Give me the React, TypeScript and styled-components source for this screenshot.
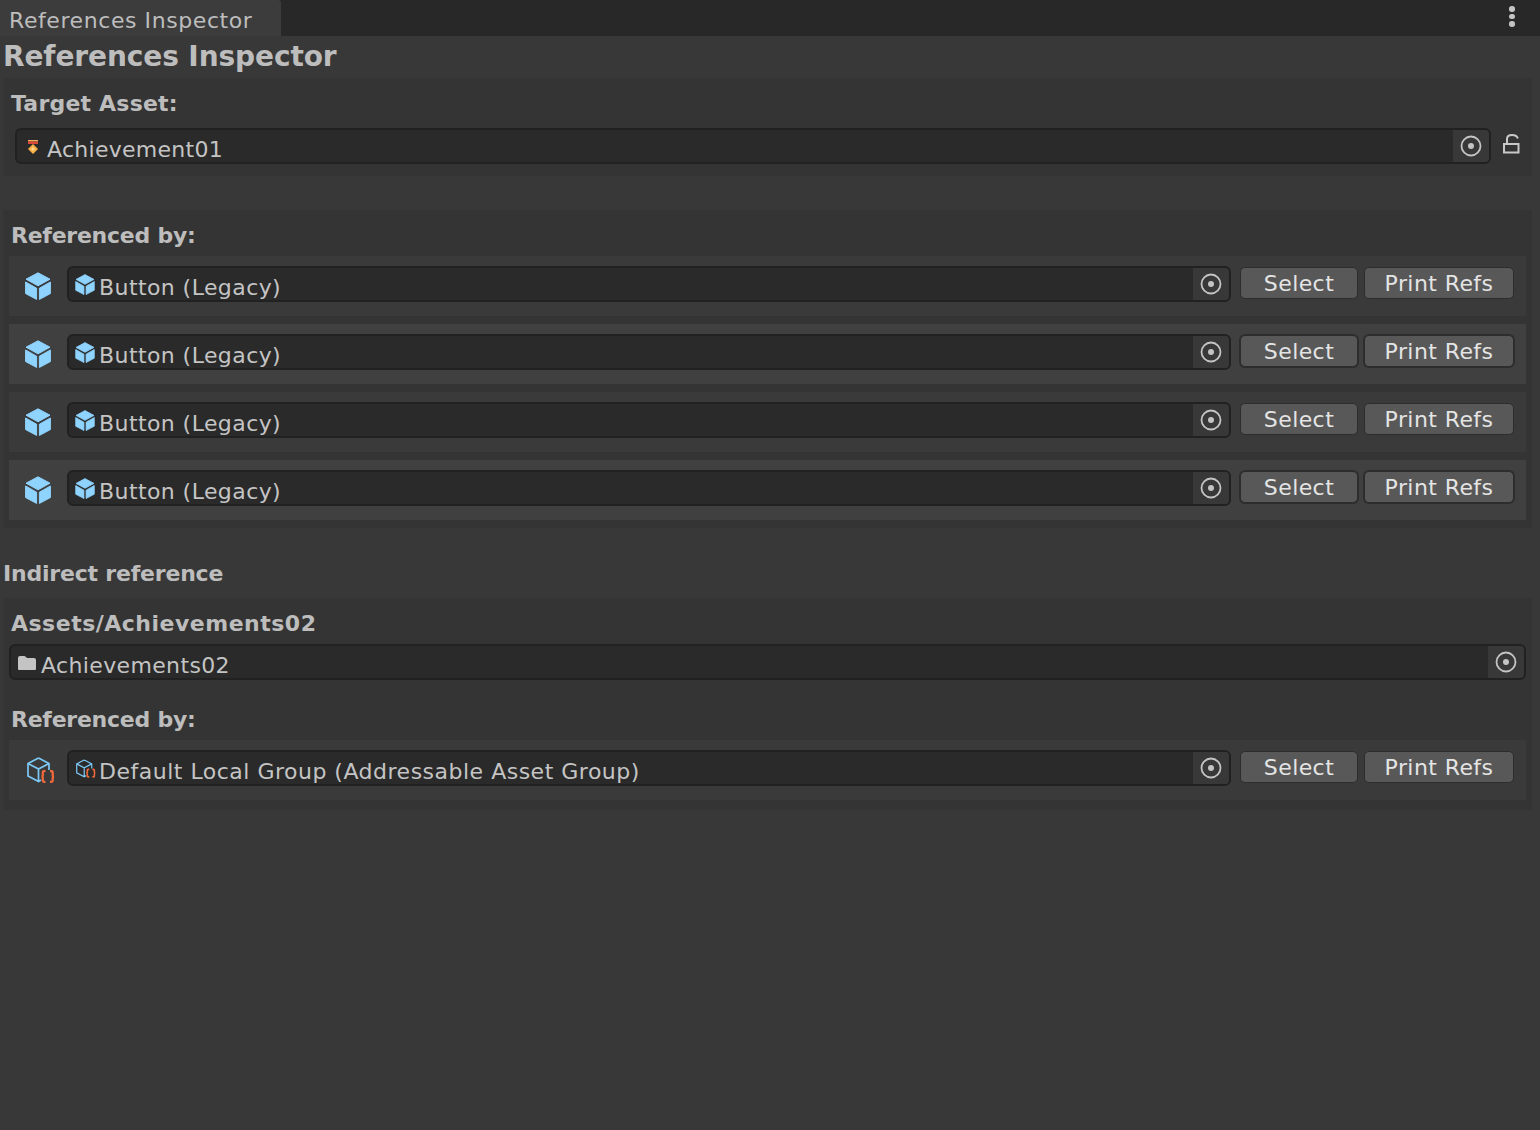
import React from "react";
import styled, { createGlobalStyle } from "styled-components";

const Global = createGlobalStyle`
  html, body {
    margin: 0;
    padding: 0;
    background: #383838;
  }
  body {
    font-family: "DejaVu Sans", Verdana, sans-serif;
    color: #c4c4c4;
  }
`;

function CubeIcon({ width, height }: { width: number; height: number }) {
  return (
    <svg width={width} height={height} viewBox="0 0 26 28">
      <g fill="#8fd3ff" stroke="#8fd3ff" strokeWidth="1" strokeLinejoin="round">
        <path d="M13 0.8 L25 7.2 L13 13.8 L1 7.2 Z" />
        <path d="M0.6 10 L11.6 16.2 L11.6 27.4 L0.6 21.6 Z" />
        <path d="M25.4 10 L14.4 16.2 L14.4 27.4 L25.4 21.6 Z" />
      </g>
    </svg>
  );
}

function GroupIcon({ width, height }: { width: number; height: number }) {
  return (
    <svg width={width} height={height} viewBox="0 0 28 26" fill="none">
      <path
        d="M11.5 1 L22 6.5 L22 13 M14 23 L11.5 24.5 L1 19 L1 6.5 L11.5 1 M1 6.5 L11.5 12 L22 6.5 M11.5 12 L11.5 24.5"
        stroke="#7cc8f5"
        strokeWidth="1.7"
      />
      <path
        d="M18.5 14.2 L17 14.2 Q15.8 14.2 15.8 15.4 L15.8 18.2 Q15.8 19.6 14.4 19.6 Q15.8 19.6 15.8 21 L15.8 23.6 Q15.8 24.8 17 24.8 L18.5 24.8 M23 14.2 L24.5 14.2 Q25.7 14.2 25.7 15.4 L25.7 18.2 Q25.7 19.6 27.1 19.6 Q25.7 19.6 25.7 21 L25.7 23.6 Q25.7 24.8 24.5 24.8 L23 24.8"
        stroke="#f0693a"
        strokeWidth="2.3"
      />
    </svg>
  );
}

function MedalIcon() {
  return (
    <svg width="10" height="14" viewBox="0 0 10 14">
      <rect x="0" y="0" width="10" height="1.5" fill="#f3b05c" />
      <rect x="0" y="1.5" width="10" height="2.5" fill="#d9483b" />
      <path d="M5 4 L10 9 L5 14 L0 9 Z" fill="#f6b04a" />
      <path d="M5 7 L7 9 L5 11 L3 9 Z" fill="#ffd98a" />
    </svg>
  );
}

function FolderIcon() {
  return (
    <svg width="20" height="18" viewBox="0 0 20 18">
      <path
        d="M1 4 Q1 2 3 2 L7 2 Q8 2 9 3 L10 4 L17 4 Q19 4 19 6 L19 15 Q19 16 18 16 L2 16 Q1 16 1 15 Z"
        fill="#c4c4c4"
      />
    </svg>
  );
}

function PickerIcon() {
  return (
    <svg width="22" height="22" viewBox="0 0 22 22" fill="none">
      <circle cx="11" cy="11" r="9.5" stroke="#c4c4c4" strokeWidth="1.8" />
      <circle cx="11" cy="11" r="3" fill="#c4c4c4" />
    </svg>
  );
}

function LockIcon() {
  return (
    <LockWrap>
      <svg width="18" height="22" viewBox="0 0 18 22" fill="none">
        <path d="M5 10 L5 6 Q5 2 10 2 Q15 2 15.8 5.5" stroke="#c8c8c8" strokeWidth="2" />
        <rect x="2" y="11" width="14.5" height="8.5" stroke="#c8c8c8" strokeWidth="2" />
      </svg>
    </LockWrap>
  );
}

const LockWrap = styled.div`
  display: flex;
  height: 22px;
  margin-top: -4px;
`;

const Window = styled.div`
  width: 1540px;
  height: 1130px;
  overflow: hidden;
  background: #383838;
  display: flex;
  flex-direction: column;
`;

const TabBar = styled.div`
  height: 36px;
  flex-shrink: 0;
  display: flex;
  justify-content: space-between;
  background: #282828;
`;

const Tab = styled.div`
  width: 281px;
  box-sizing: border-box;
  padding: 6px 0 0 9px;
  background: #3c3c3c;
  border-top-right-radius: 3px;
  font-size: 22px;
  letter-spacing: 0.58px;
  line-height: 30px;
  color: #bdbdbd;
`;

const MenuDots = styled.div`
  width: 28px;
  margin-right: 14px;
  display: flex;
  flex-direction: column;
  align-items: center;
  gap: 2.2px;
  padding-top: 6px;
  span {
    width: 5.5px;
    height: 5.5px;
    border-radius: 50%;
    background: #c4c4c4;
  }
`;

const Body = styled.div`
  padding: 0 8px 0 3px;
  display: flex;
  flex-direction: column;
`;

const Title = styled.div`
  height: 42px;
  font-size: 28px;
  font-weight: 700;
  letter-spacing: -0.1px;
  line-height: 41px;
  color: #bdbdbd;
`;

const Box = styled.div<{ $height: number; $gap: number }>`
  height: ${(p) => p.$height}px;
  margin-bottom: ${(p) => p.$gap}px;
  background: #343434;
  box-sizing: border-box;
  padding: 0 6px;
`;

const Heading = styled.div<{ $spacing?: number }>`
  box-sizing: border-box;
  font-size: 22px;
  font-weight: 700;
  letter-spacing: ${(p) => p.$spacing ?? 0}px;
  color: #bdbdbd;
  line-height: 30px;
  padding: 1px 0 0 2px;
  height: 30px;
`;

const PlainHeading = styled(Heading)`
  padding-left: 0;
  margin-bottom: 10px;
`;

const TargetRow = styled.div`
  display: flex;
  align-items: center;
  padding: 0 6px;
  gap: 11px;
  height: 36px;
`;

const Field = styled.div`
  flex: 1;
  min-width: 0;
  height: 36px;
  box-sizing: border-box;
  display: flex;
  align-items: stretch;
  background: #2a2a2a;
  border: 2px solid #212121;
  border-radius: 6px;
  overflow: hidden;
`;

const FieldValue = styled.div`
  flex: 1;
  min-width: 0;
  display: flex;
  align-items: center;
  gap: 4px;
  padding-left: 6px;
  font-size: 22px;
  color: #c4c4c4;
  line-height: 32px;
  white-space: nowrap;
`;

const IconSlot = styled.span<{ $offset?: number; $shift?: number }>`
  width: 20px;
  height: 24px;
  display: flex;
  align-items: center;
  justify-content: center;
  flex-shrink: 0;
  margin-top: ${(p) => p.$offset ?? 0}px;
  margin-left: ${(p) => p.$shift ?? 0}px;
  margin-right: ${(p) => -(p.$shift ?? 0)}px;
`;

const Label = styled.span<{ $spacing?: number }>`
  position: relative;
  top: 4px;
  letter-spacing: ${(p) => p.$spacing ?? 0.42}px;
`;

const Picker = styled.div`
  width: 36px;
  flex-shrink: 0;
  background: #383838;
  display: flex;
  align-items: center;
  justify-content: center;
`;

const RowList = styled.div`
  display: flex;
  flex-direction: column;
  gap: 8px;
`;

const Row = styled.div<{ $alt?: boolean }>`
  height: 60px;
  box-sizing: border-box;
  display: flex;
  align-items: flex-start;
  padding: 10px 12px 0 58px;
  background: ${(p) => (p.$alt ? "#404040" : "#3a3a3a")};
  position: relative;
`;

const RowIcon = styled.div<{ $left: number; $top: number }>`
  position: absolute;
  left: ${(p) => p.$left}px;
  top: ${(p) => p.$top}px;
  display: flex;
`;

const ButtonGroup = styled.div`
  display: flex;
  gap: 6px;
  margin: 1px 0 0 9px;
`;

const Button = styled.div<{ $wide?: boolean; $alt?: boolean }>`
  width: ${(p) => (p.$wide ? 150 : 118)}px;
  height: 32px;
  box-sizing: border-box;
  display: flex;
  align-items: center;
  justify-content: center;
  background: #585858;
  border: 1px solid #2d2d2d;
  border-radius: 5px;
  box-shadow: ${(p) => (p.$alt ? "0 0 0 1px #2d2d2d" : "none")};
  font-size: 22px;
  letter-spacing: 0.42px;
  color: #e4e4e4;
`;

const Spacer = styled.div<{ $h: number }>`
  height: ${(p) => p.$h}px;
`;

function ReferenceRow({
  alt,
  group,
  name,
}: {
  alt?: boolean;
  group?: boolean;
  name: string;
}) {
  return (
    <Row $alt={alt}>
      <RowIcon $left={group ? 18 : 16} $top={group ? 17 : 16}>
        {group ? <GroupIcon width={28} height={26} /> : <CubeIcon width={26} height={28} />}
      </RowIcon>
      <Field>
        <FieldValue>
          {group ? (
            <IconSlot $shift={1}>
              <GroupIcon width={22} height={21} />
            </IconSlot>
          ) : (
            <IconSlot>
              <CubeIcon width={21} height={21} />
            </IconSlot>
          )}
          <Label $spacing={group ? 0.5 : 0.42}>{name}</Label>
        </FieldValue>
        <Picker>
          <PickerIcon />
        </Picker>
      </Field>
      <ButtonGroup>
        <Button $alt={alt}>Select</Button>
        <Button $alt={alt} $wide>
          Print Refs
        </Button>
      </ButtonGroup>
    </Row>
  );
}

export default function App() {
  return (
    <Window>
      <Global />
      <TabBar>
        <Tab>References Inspector</Tab>
        <MenuDots>
          <span />
          <span />
          <span />
        </MenuDots>
      </TabBar>
      <Body>
        <Title>References Inspector</Title>
        <Box $height={98} $gap={34}>
          <Spacer $h={10} />
          <Heading $spacing={0.2}>Target Asset:</Heading>
          <Spacer $h={10} />
          <TargetRow>
            <Field>
              <FieldValue>
                <IconSlot $offset={2}>
                  <MedalIcon />
                </IconSlot>
                <Label $spacing={0.27}>Achievement01</Label>
              </FieldValue>
              <Picker>
                <PickerIcon />
              </Picker>
            </Field>
            <LockIcon />
          </TargetRow>
        </Box>
        <Box $height={318} $gap={30}>
          <Spacer $h={10} />
          <Heading $spacing={-0.25}>Referenced by:</Heading>
          <Spacer $h={6} />
          <RowList>
            <ReferenceRow name="Button (Legacy)" />
            <ReferenceRow alt name="Button (Legacy)" />
            <ReferenceRow name="Button (Legacy)" />
            <ReferenceRow alt name="Button (Legacy)" />
          </RowList>
        </Box>
        <PlainHeading $spacing={-0.2}>Indirect reference</PlainHeading>
        <Box $height={212} $gap={0}>
          <Spacer $h={10} />
          <Heading $spacing={0.5}>Assets/Achievements02</Heading>
          <Spacer $h={6} />
          <Field>
            <FieldValue>
              <IconSlot $offset={2}>
                <FolderIcon />
              </IconSlot>
              <Label $spacing={0.36}>Achievements02</Label>
            </FieldValue>
            <Picker>
              <PickerIcon />
            </Picker>
          </Field>
          <Spacer $h={24} />
          <Heading $spacing={-0.25}>Referenced by:</Heading>
          <Spacer $h={6} />
          <ReferenceRow group name="Default Local Group (Addressable Asset Group)" />
        </Box>
      </Body>
    </Window>
  );
}
